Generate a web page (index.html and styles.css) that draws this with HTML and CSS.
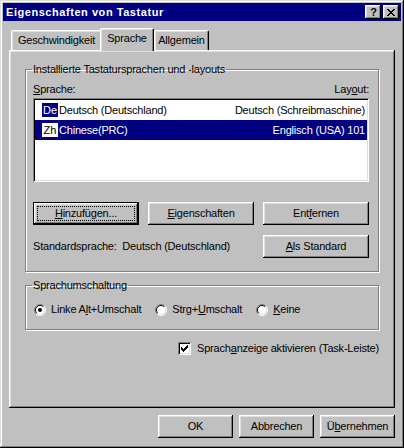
FILE: index.html
```html
<!DOCTYPE html>
<html lang="de">
<head>
    <meta charset="UTF-8">
    <title>Eigenschaften von Tastatur</title>
    <link rel="stylesheet" href="styles.css">
</head>
<body>

<div class="window">
    <div class="titlebar">
        <span class="title">Eigenschaften von Tastatur</span>
        <div class="title-buttons">
            <span class="tbtn tbtn-help">?</span>
            <span class="tbtn">
                <svg width="8" height="7" viewBox="0 0 8 7"><path fill="#000" d="M0 0h2v1h-2z M6 0h2v1h-2z M1 1h2v1h-2z M5 1h2v1h-2z M2 2h4v1h-4z M3 3h2v1h-2z M2 4h4v1h-4z M1 5h2v1h-2z M5 5h2v1h-2z M0 6h2v1h-2z M6 6h2v1h-2z"/></svg>
            </span>
        </div>
    </div>

    <div class="tabs">
        <div class="tab tab-speed">Geschwindigkeit</div>
        <div class="tab tab-lang active">Sprache</div>
        <div class="tab tab-general">Allgemein</div>
    </div>

    <div class="panel">
        <fieldset class="group group-lang">
            <legend>Installierte Tastatursprachen und -layouts</legend>

            <div class="list-head">
                <span><u>S</u>prache:</span>
                <span>Lay<u>o</u>ut:</span>
            </div>

            <div class="listbox">
                <div class="list-row">
                    <span class="lang-icon">De</span>
                    <span class="lang-name">Deutsch (Deutschland)</span>
                    <span class="lang-layout">Deutsch (Schreibmaschine)</span>
                </div>
                <div class="list-row selected">
                    <span class="lang-icon">Zh</span>
                    <span class="lang-name">Chinese(PRC)</span>
                    <span class="lang-layout">Englisch (USA) 101</span>
                </div>
            </div>

            <div class="btn-row">
                <button class="btn btn-wide default"><u>H</u>inzufügen...</button>
                <button class="btn btn-wide"><u>E</u>igenschaften</button>
                <button class="btn btn-wide">Ent<u>f</u>ernen</button>
            </div>

            <div class="std-row">
                <span>Standardsprache:&nbsp;&nbsp;Deutsch (Deutschland)</span>
                <button class="btn btn-wide"><u>A</u>ls Standard</button>
            </div>
        </fieldset>

        <fieldset class="group group-switch">
            <legend>Sprachumschaltung</legend>
            <div class="radio-row">
                <label class="radio">
                    <svg width="12" height="12" viewBox="0 0 12 12">
                        <circle cx="6" cy="6" r="5" fill="#fff"/>
                        <path d="M2.1 9.9A5.5 5.5 0 0 1 9.9 2.1" fill="none" stroke="#808080"/>
                        <path d="M9.9 2.1A5.5 5.5 0 0 1 2.1 9.9" fill="none" stroke="#fff"/>
                        <path d="M2.8 9.2A4.5 4.5 0 0 1 9.2 2.8" fill="none" stroke="#000"/>
                        <path d="M9.2 2.8A4.5 4.5 0 0 1 2.8 9.2" fill="none" stroke="#dfdfdf"/>
                        <circle cx="6" cy="6" r="2" fill="#000"/>
                    </svg>
                    <span>Linke A<u>l</u>t+Umschalt</span>
                </label>
                <label class="radio">
                    <svg width="12" height="12" viewBox="0 0 12 12">
                        <circle cx="6" cy="6" r="5" fill="#fff"/>
                        <path d="M2.1 9.9A5.5 5.5 0 0 1 9.9 2.1" fill="none" stroke="#808080"/>
                        <path d="M9.9 2.1A5.5 5.5 0 0 1 2.1 9.9" fill="none" stroke="#fff"/>
                        <path d="M2.8 9.2A4.5 4.5 0 0 1 9.2 2.8" fill="none" stroke="#000"/>
                        <path d="M9.2 2.8A4.5 4.5 0 0 1 2.8 9.2" fill="none" stroke="#dfdfdf"/>
                    </svg>
                    <span>Strg+<u>U</u>mschalt</span>
                </label>
                <label class="radio">
                    <svg width="12" height="12" viewBox="0 0 12 12">
                        <circle cx="6" cy="6" r="5" fill="#fff"/>
                        <path d="M2.1 9.9A5.5 5.5 0 0 1 9.9 2.1" fill="none" stroke="#808080"/>
                        <path d="M9.9 2.1A5.5 5.5 0 0 1 2.1 9.9" fill="none" stroke="#fff"/>
                        <path d="M2.8 9.2A4.5 4.5 0 0 1 9.2 2.8" fill="none" stroke="#000"/>
                        <path d="M9.2 2.8A4.5 4.5 0 0 1 2.8 9.2" fill="none" stroke="#dfdfdf"/>
                    </svg>
                    <span><u>K</u>eine</span>
                </label>
            </div>
        </fieldset>

        <div class="check-row">
            <span class="checkbox">
                <svg width="13" height="13" viewBox="0 0 13 13"><path fill="#000" d="M3 5h1v1h1v1h1v-1h1v-1h1v-1h1v-1h1v3h-1v1h-1v1h-1v1h-1v1h-1v-1h-1v-1h-1z"/></svg>
            </span>
            <span>Sprach<u>a</u>nzeige aktivieren (Task-Leiste)</span>
        </div>
    </div>

    <div class="dialog-buttons">
        <button class="btn">OK</button>
        <button class="btn">Abbrechen</button>
        <button class="btn">Ü<u>b</u>ernehmen</button>
    </div>
</div>

</body>
</html>
```

FILE: styles.css
```css
*{
    margin: 0;
    padding: 0;
    box-sizing: border-box;
}
body{
    width: 404px;
    height: 448px;
    background-color: #c0c0c0;
    color: #000;
    font-family: "Liberation Sans", Arial, sans-serif;
    font-size: 11px;
    line-height: 13px;
    letter-spacing: -0.2px;
}
u{
    text-decoration: underline;
    text-underline-offset: 1px;
}

/* window frame */
.window{
    width: 404px;
    height: 448px;
    padding: 3px;
    display: flex;
    flex-direction: column;
    background-color: #c0c0c0;
    box-shadow: inset -1px -1px #000, inset 1px 1px #dfdfdf, inset -2px -2px #808080, inset 2px 2px #fff;
}
.titlebar{
    flex: none;
    height: 18px;
    padding: 0 2px 0 3px;
    display: flex;
    align-items: center;
    justify-content: space-between;
    background-color: #000080;
    color: #fff;
}
.title{
    font-weight: bold;
    letter-spacing: 0.55px;
}
.title-buttons{
    display: flex;
    gap: 2px;
}
.tbtn{
    width: 16px;
    height: 14px;
    display: flex;
    align-items: center;
    justify-content: center;
    background-color: #c0c0c0;
    color: #000;
    box-shadow: inset -1px -1px #000, inset 1px 1px #fff, inset -2px -2px #808080, inset 2px 2px #dfdfdf;
}
.tbtn-help{
    font-weight: bold;
    letter-spacing: 0;
    padding-left: 1px;
}

/* tabs */
.tabs{
    flex: none;
    height: 22px;
    margin-top: 7px;
    padding-left: 8px;
    display: flex;
    align-items: flex-end;
}
.tab{
    height: 20px;
    display: flex;
    align-items: center;
    justify-content: center;
    border-top: 1px solid #fff;
    border-left: 1px solid #fff;
    border-right: 1px solid #000;
    border-radius: 2px 2px 0 0;
    box-shadow: inset -1px 0 #808080, inset 1px 1px #dfdfdf;
    background-color: #c0c0c0;
}
.tab-speed{ width: 91px; }
.tab-lang{ width: 54px; }
.tab-general{ width: 55px; }
.tab.active{
    height: 23px;
    margin-bottom: -1px;
    margin-left: -2px;
    padding-bottom: 3px;
    position: relative;
    z-index: 1;
}

/* tab page */
.panel{
    flex: none;
    height: 358px;
    margin: 0 6px;
    padding: 13px 16px 0;
    box-shadow: inset -1px -1px #000, inset 1px 1px #fff, inset -2px -2px #808080, inset 2px 2px #dfdfdf;
}
.group{
    min-width: 0;
    border: 1px solid #808080;
    box-shadow: inset 1px 1px #fff, 1px 1px #fff;
    padding: 0 9px 13px 7px;
}
.group legend{
    padding: 0 1px;
    margin-left: -1px;
}
.list-head{
    margin-top: 7px;
    display: flex;
    justify-content: space-between;
}
.listbox{
    margin-top: 2px;
    height: 84px;
    padding: 2px;
    background-color: #fff;
    box-shadow: inset 1px 1px #808080, inset -1px -1px #fff, inset 2px 2px #000, inset -2px -2px #dfdfdf;
}
.list-row{
    height: 20px;
    padding-right: 2px;
    display: flex;
    align-items: center;
}
.lang-icon{
    width: 16px;
    height: 14px;
    margin-left: 7px;
    margin-right: 1px;
    display: flex;
    align-items: center;
    justify-content: center;
    letter-spacing: 0;
    background-color: #000080;
    color: #fff;
}
.lang-layout{
    margin-left: auto;
}
.list-row.selected{
    background-color: #000080;
    color: #fff;
}
.list-row.selected .lang-icon{
    background-color: #fff;
    color: #000;
}

/* buttons */
.btn{
    width: 75px;
    height: 23px;
    border: none;
    background-color: #c0c0c0;
    color: #000;
    font: inherit;
    letter-spacing: inherit;
    position: relative;
    box-shadow: inset -1px -1px #000, inset 1px 1px #fff, inset -2px -2px #808080, inset 2px 2px #dfdfdf;
}
.btn-wide{
    width: 106px;
}
.btn.default{
    box-shadow: inset 0 0 0 1px #000, inset -2px -2px #000, inset 2px 2px #fff, inset -3px -3px #808080, inset 3px 3px #dfdfdf;
}
.btn.default::after{
    content: "";
    position: absolute;
    left: 4px;
    top: 4px;
    right: 4px;
    bottom: 4px;
    border: 1px dotted #000;
}
.btn-row{
    margin-top: 20px;
    display: flex;
    justify-content: space-between;
}
.std-row{
    margin-top: 10px;
    display: flex;
    align-items: center;
    justify-content: space-between;
}

/* switch group */
.group-switch{
    margin-top: 7px;
}
.radio-row{
    margin-top: 11px;
    margin-left: 1px;
    display: flex;
    gap: 14px;
}
.radio{
    display: flex;
    align-items: center;
    gap: 5px;
}
.radio svg{
    display: block;
}
.check-row{
    margin-top: 12px;
    display: flex;
    align-items: center;
    justify-content: flex-end;
    gap: 6px;
}
.checkbox{
    width: 13px;
    height: 13px;
    background-color: #fff;
    box-shadow: inset 1px 1px #808080, inset -1px -1px #fff, inset 2px 2px #000, inset -2px -2px #dfdfdf;
}
.checkbox svg{
    display: block;
}

.dialog-buttons{
    flex: none;
    margin: 7px 6px 0 0;
    display: flex;
    justify-content: flex-end;
    gap: 6px;
}
```
